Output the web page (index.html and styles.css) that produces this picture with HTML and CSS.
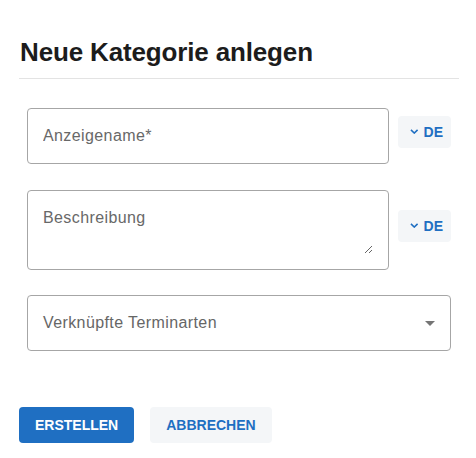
FILE: index.html
```html
<!DOCTYPE html>
<html lang="de">
<head>
<meta charset="utf-8">
<title>Neue Kategorie anlegen</title>
<link rel="stylesheet" href="styles.css">
</head>
<body>
<div class="dialog">
  <h1 class="title">Neue Kategorie anlegen</h1>
  <form class="form">
    <div class="row">
      <input class="field input" type="text" placeholder="Anzeigename*">
      <button type="button" class="lang">
        <svg class="chev" width="9" height="5" viewBox="0 0 9 5"><path d="M1 0.8 L4.5 4.2 L8 0.8" fill="none" stroke="#1f6fc2" stroke-width="1.6"/></svg>
        <span>DE</span>
      </button>
    </div>
    <div class="row">
      <div class="field area">
        <textarea class="ta" placeholder="Beschreibung"></textarea>
      </div>
      <button type="button" class="lang">
        <svg class="chev" width="9" height="5" viewBox="0 0 9 5"><path d="M1 0.8 L4.5 4.2 L8 0.8" fill="none" stroke="#1f6fc2" stroke-width="1.6"/></svg>
        <span>DE</span>
      </button>
    </div>
    <div class="row">
      <div class="field select">
        <span>Verknüpfte Terminarten</span>
        <svg width="10" height="5" viewBox="0 0 10 5"><path d="M0 0 L10 0 L5 5 Z" fill="#757575"/></svg>
      </div>
    </div>
  </form>
  <div class="actions">
    <button type="button" class="btn primary">ERSTELLEN</button>
    <button type="button" class="btn secondary">ABBRECHEN</button>
  </div>
</div>
</body>
</html>
```
FILE: styles.css
```css
html, body {
  margin: 0;
  padding: 0;
  background: #ffffff;
}
body {
  font-family: "Liberation Sans", Arial, sans-serif;
  color: #1a1a1a;
}
.dialog {
  width: 440px;
  padding: 37px 0 0 19px;
}
.title {
  margin: 0;
  padding: 0 0 11px 1px;
  font-size: 26px;
  line-height: 30px;
  font-weight: bold;
  letter-spacing: -0.15px;
  color: #1c1c1c;
  border-bottom: 1px solid #e3e3e3;
}
.form {
  margin: 21px 0 0 0;
  padding: 0 8px;
  display: flex;
  flex-direction: column;
  gap: 18px;
}
.row {
  display: flex;
  align-items: center;
  gap: 9px;
}
.field {
  flex: 1;
  box-sizing: border-box;
  margin-top: 8px;
  border: 1px solid #a6a6a6;
  border-radius: 4px;
  font-family: "Liberation Sans", Arial, sans-serif;
  font-size: 16px;
  letter-spacing: 0.4px;
  color: #666666;
  background: #ffffff;
}
.input {
  height: 56px;
  padding: 0 15px;
  outline: none;
}
.input::placeholder, .ta::placeholder {
  color: #686868;
  opacity: 1;
}
.area {
  height: 80px;
  padding: 15px 15px 0 15px;
}
.ta {
  display: block;
  width: 100%;
  height: 48px;
  box-sizing: border-box;
  margin: 0;
  padding: 0;
  border: none;
  outline: none;
  resize: vertical;
  font-family: "Liberation Sans", Arial, sans-serif;
  font-size: 16px;
  line-height: 23px;
  letter-spacing: 0.4px;
  color: #333333;
  background: transparent;
}
.select {
  height: 56px;
  margin-top: 7px;
  padding: 0 15px;
  display: flex;
  align-items: center;
  justify-content: space-between;
}
.lang {
  flex: none;
  width: 53px;
  height: 32px;
  box-sizing: border-box;
  padding: 0 8px 0 12px;
  border: none;
  border-radius: 4px;
  background: #f4f6f8;
  display: flex;
  align-items: center;
  gap: 5px;
  font-family: "Liberation Sans", Arial, sans-serif;
  font-size: 14px;
  font-weight: bold;
  color: #1f6fc2;
}
.chev {
  margin-top: -1px;
}
.actions {
  margin-top: 56px;
  display: flex;
  gap: 16px;
}
.btn {
  height: 36px;
  padding: 0 16px;
  border: none;
  border-radius: 4px;
  font-family: "Liberation Sans", Arial, sans-serif;
  font-size: 14px;
  font-weight: bold;
}
.primary {
  background: #1f6fc2;
  color: #ffffff;
}
.secondary {
  background: #f4f6f8;
  color: #1f6fc2;
}
```
